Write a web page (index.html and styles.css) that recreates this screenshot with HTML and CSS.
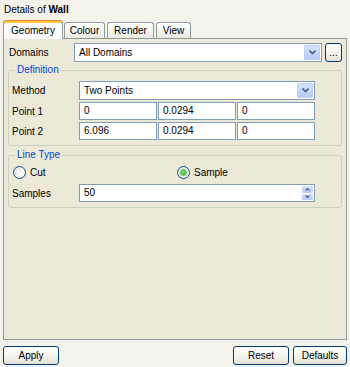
FILE: index.html
```html
<!DOCTYPE html>
<html>
<head>
<meta charset="utf-8">
<link rel="stylesheet" href="styles.css">
</head>
<body>
<div class="title">Details of <b>Wall</b></div>
<div class="tabs">
  <div class="tab sel">Geometry</div>
  <div class="tab t-colour">Colour</div>
  <div class="tab t-render">Render</div>
  <div class="tab t-view">View</div>
</div>
<div class="panel">
  <div class="row domains">
    <span class="lbl lbl-dom">Domains</span>
    <div class="combo combo-dom"><span class="val">All Domains</span><span class="drop"><svg width="7" height="5" viewBox="0 0 7 5"><path d="M0.5 0.5 L3.5 3.5 L6.5 0.5" fill="none" stroke="#4d6185" stroke-width="1.6"/></svg></span></div>
    <button class="btn dots">...</button>
  </div>
  <fieldset class="group g-def">
    <legend>Definition</legend>
    <div class="row">
      <span class="lbl">Method</span>
      <div class="combo combo-wide"><span class="val">Two Points</span><span class="drop"><svg width="7" height="5" viewBox="0 0 7 5"><path d="M0.5 0.5 L3.5 3.5 L6.5 0.5" fill="none" stroke="#4d6185" stroke-width="1.6"/></svg></span></div>
    </div>
    <div class="row">
      <span class="lbl">Point 1</span>
      <div class="triple">
        <div class="inp">0</div><div class="inp">0.0294</div><div class="inp">0</div>
      </div>
    </div>
    <div class="row">
      <span class="lbl">Point 2</span>
      <div class="triple">
        <div class="inp">6.096</div><div class="inp">0.0294</div><div class="inp">0</div>
      </div>
    </div>
  </fieldset>
  <fieldset class="group g-line">
    <legend>Line Type</legend>
    <div class="radios">
      <label class="radio"><span class="circle"></span>Cut</label>
      <label class="radio"><span class="circle on"><span class="dot"></span></span>Sample</label>
    </div>
    <div class="row">
      <span class="lbl">Samples</span>
      <div class="inp spin"><span class="val">50</span><span class="spinbtns"><span class="sb"><svg width="5" height="3" viewBox="0 0 5 3"><path d="M0.5 2.5 L2.5 0.5 L4.5 2.5" fill="none" stroke="#4d6185" stroke-width="1.2"/></svg></span><span class="sb"><svg width="5" height="3" viewBox="0 0 5 3"><path d="M0.5 0.5 L2.5 2.5 L4.5 0.5" fill="none" stroke="#4d6185" stroke-width="1.2"/></svg></span></span></div>
    </div>
  </fieldset>
</div>
<div class="footer">
  <button class="btn b-apply">Apply</button>
  <div class="right">
    <button class="btn b-reset">Reset</button>
    <button class="btn b-def">Defaults</button>
  </div>
</div>
</body>
</html>
```
FILE: styles.css
```css
* { box-sizing: border-box; }
html, body { margin: 0; padding: 0; }
body {
  width: 350px;
  height: 367px;
  overflow: hidden;
  background: #f3f2eb;
  font-family: "Liberation Sans", Arial, sans-serif;
  font-size: 10px;
  color: #000;
}
.title {
  height: 19px;
  padding: 4px 0 0 4px;
  line-height: 12px;
}
.title b { font-weight: bold; }
.tabs {
  display: flex;
  align-items: flex-end;
  height: 19px;
  padding-left: 3px;
}
.tab {
  height: 16px;
  border: 1px solid #919b9c;
  border-bottom: none;
  border-radius: 3px 3px 0 0;
  background: linear-gradient(#ffffff, #f3f3ef 60%, #e9e8e0);
  text-align: center;
  line-height: 15px;
}
.tab.sel {
  width: 60px;
  height: 19px;
  margin-bottom: -1px;
  position: relative;
  z-index: 1;
  background: #fcfcfb;
  border-top: 1px solid #e68b2c;
  box-shadow: inset 0 2px 0 #ffc73c;
  line-height: 19px;
}
.t-colour { width: 41px; margin-left: 1px; }
.t-render { width: 47px; margin-left: 2px; }
.t-view { width: 35px; margin-left: 2px; }
.panel {
  margin-left: 3px;
  width: 344px;
  height: 302px;
  border: 1px solid #919b9c;
  border-right-color: #919b9c;
  background: #ece9d8;
  padding: 4px 4px 0 4px;
}
.row {
  display: flex;
  align-items: center;
}
.lbl {
  width: 67px;
  flex: none;
}
.domains { padding-left: 1px; height: 19px; }
.lbl-dom { width: 65px; }
.combo {
  height: 19px;
  border: 1px solid #7f9db9;
  background: #fff;
  display: flex;
  align-items: center;
  padding: 1px;
}
.combo .val { flex: 1; padding-left: 3px; }
.combo-dom { width: 248px; }
.combo-wide { width: 236px; }
.drop {
  width: 16px;
  height: 15px;
  border: 1px solid #bccdf9;
  border-radius: 1px;
  background: linear-gradient(#d6e2fd, #b8cbf7);
  display: flex;
  align-items: center;
  justify-content: center;
}
.btn {
  font-family: inherit;
  font-size: 10px;
  color: #000;
  height: 19px;
  border: 1px solid #003c74;
  border-radius: 3px;
  background: linear-gradient(#ffffff, #f3f2ec 60%, #e3e0d3);
  padding: 0;
}
.dots {
  width: 17px;
  margin-left: 3px;
  line-height: 8px;
}
.group {
  margin: 0;
  border: 1px solid #d0d0bf;
  border-radius: 3px;
  padding: 5px 26px 5px 3px;
  display: flex;
  flex-direction: column;
  gap: 2px;
}
.group legend {
  color: #0046d5;
  padding: 0 2px;
  margin-left: 3px;
  line-height: 12px;
}
.g-def { margin-top: 2px; }
.g-def .row:first-of-type { height: 19px; }
.g-line { margin-top: 3px; padding-top: 3px; gap: 4px; }
.triple {
  display: grid;
  grid-template-columns: 78px 78px 78px;
  gap: 1px;
}
.inp {
  height: 18px;
  border: 1px solid #7f9db9;
  background: #fff;
  padding-left: 4px;
  line-height: 16px;
}
.radios {
  display: grid;
  grid-template-columns: 164px 1fr;
  height: 16px;
  align-items: center;
}
.radio {
  display: flex;
  align-items: center;
  gap: 4px;
  padding-left: 1px;
}
.circle {
  width: 13px;
  height: 13px;
  border-radius: 50%;
  border: 1px solid #1c5180;
  background: radial-gradient(circle at 65% 65%, #ffffff, #dcdcd4);
  display: flex;
  align-items: center;
  justify-content: center;
}
.dot {
  width: 5px;
  height: 5px;
  border-radius: 50%;
  background: radial-gradient(circle at 40% 35%, #7ee37e, #21a121);
  box-shadow: 0 0 0 1px #5dc95d;
}
.spin {
  width: 236px;
  display: flex;
  align-items: center;
  padding: 1px 1px 1px 4px;
}
.spin .val { flex: 1; }
.spinbtns {
  display: flex;
  flex-direction: column;
  gap: 1px;
  width: 11px;
  height: 14px;
}
.sb {
  flex: 1;
  border-radius: 1px;
  background: linear-gradient(#d6e2fd, #b8cbf7);
  display: flex;
  align-items: center;
  justify-content: center;
}
.footer {
  display: flex;
  justify-content: space-between;
  padding: 6px 3px 0 3px;
}
.right { display: flex; gap: 4px; }
.b-apply { width: 56px; }
.b-reset { width: 56px; }
.b-def { width: 54px; }
```
